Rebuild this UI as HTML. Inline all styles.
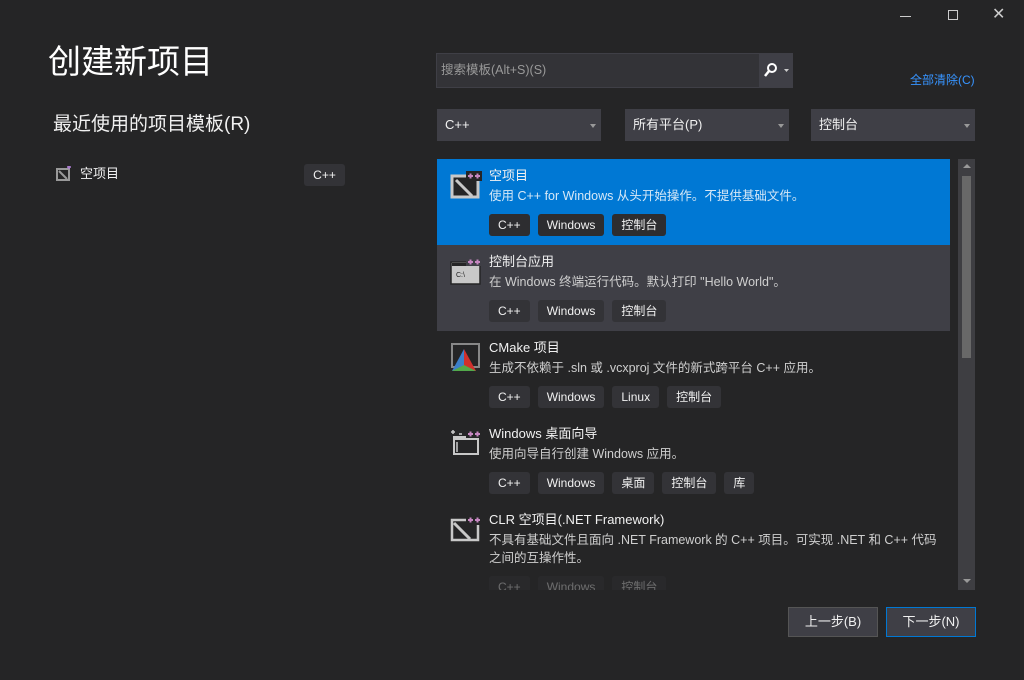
<!DOCTYPE html>
<html><head><meta charset="utf-8"><style>
*{margin:0;padding:0;box-sizing:border-box}
body{width:1024px;height:680px;background:#252526;color:#f1f1f1;font-family:"Liberation Sans","Noto Sans CJK SC",sans-serif;position:relative;overflow:hidden}
.a{position:absolute}
.dd{position:absolute;top:109px;height:32px;background:#3f3f46;font-size:13px;line-height:32px;padding:0 8px;color:#f1f1f1}
.dd:after{content:"";position:absolute;right:5px;top:15px;border:3px solid transparent;border-top:4px solid #999}
.item{position:absolute;left:437px;width:513px;height:86px}
.item .t{position:absolute;left:52px;top:8px;font-size:13px;line-height:18px}
.item .d{position:absolute;left:52px;top:28px;font-size:12.5px;color:#cfcfcf;line-height:18px;width:455px}
.tags{position:absolute;left:52px;top:55px;display:flex;gap:8px}
.tag{height:22px;background:#333337;border-radius:3px;font-size:12px;line-height:22px;padding:0 9px;color:#f1f1f1}
.ic{position:absolute;left:13px;top:12px}
.btn{position:absolute;top:607px;width:90px;height:30px;background:#3f3f46;border:1px solid #555;font-size:13px;text-align:center;line-height:28px}
</style></head><body>
<div class="a" style="left:900px;top:16px;width:11px;height:1px;background:#ccc"></div>
<div class="a" style="left:948px;top:10px;width:10px;height:10px;border:1px solid #ccc"></div>
<div class="a" style="left:992px;top:4px;font-size:16px;color:#ccc">✕</div>
<div class="a" style="left:48px;top:40px;font-size:33px;line-height:44px;color:#fff">创建新项目</div>
<div class="a" style="left:53px;top:112px;font-size:19px;line-height:26px">最近使用的项目模板(R)</div>
<svg class="a" style="left:56px;top:166px" width="16" height="16"><rect x="1" y="3" width="12" height="11" fill="none" stroke="#999" stroke-width="2"/><path d="M3 5L11 13" stroke="#999" stroke-width="2"/><path d="M11 1h4M13 -1v4" stroke="#b180d7" stroke-width="1.5"/></svg>
<div class="a" style="left:80px;top:165px;font-size:13px;line-height:18px">空项目</div>
<div class="a tag" style="left:304px;top:164px;width:41px;text-align:center;padding:0">C++</div>
<div class="a" style="left:436px;top:53px;width:357px;height:35px;background:#333337;border:1px solid #3f3f46"></div>
<div class="a" style="left:441px;top:61px;font-size:12.5px;line-height:18px;color:#999">搜索模板(Alt+S)(S)</div>
<div class="a" style="left:759px;top:54px;width:34px;height:33px;background:#3f3f46"></div>
<svg class="a" style="left:764px;top:62px" width="28" height="16"><circle cx="8" cy="6" r="4" fill="none" stroke="#fff" stroke-width="2"/><path d="M5 9L1 14" stroke="#fff" stroke-width="2.5"/><path d="M20 7h5l-2.5 3z" fill="#ccc"/></svg>
<div class="a" style="left:910px;top:71px;font-size:12px;line-height:18px;color:#3794ff">全部清除(C)</div>
<div class="dd" style="left:437px;width:164px">C++</div>
<div class="dd" style="left:625px;width:164px">所有平台(P)</div>
<div class="dd" style="left:811px;width:164px">控制台</div>

<div class="item" style="top:159px;background:#0078d4">
<svg class="ic" width="32" height="28"><rect x="2" y="5" width="26" height="21" fill="#252526" stroke="#c8c8c8" stroke-width="3"/><path d="M6 9L22 25" stroke="#c8c8c8" stroke-width="3"/><rect x="16" y="0" width="16" height="10" fill="#252526"/><path d="M18 5h5M20.5 2.5v5M25 5h5M27.5 2.5v5" stroke="#c586c0" stroke-width="2"/></svg>
<div class="t">空项目</div><div class="d" style="color:#d6e8f7">使用 C++ for Windows 从头开始操作。不提供基础文件。</div>
<div class="tags"><div class="tag" style="background:#2d2d30">C++</div><div class="tag" style="background:#2d2d30">Windows</div><div class="tag" style="background:#2d2d30">控制台</div></div></div>

<div class="item" style="top:245px;background:#3f3f46">
<svg class="ic" width="32" height="28"><rect x="1" y="5" width="29" height="22" fill="#c8c8c8" stroke="#252526" stroke-width="1.5"/><rect x="2" y="6" width="27" height="3" fill="#252526"/><text x="6" y="20" font-size="7" fill="#222" font-family="Liberation Sans">C:\</text><rect x="16" y="0" width="16" height="9" fill="#3f3f46"/><path d="M18 5h5M20.5 2.5v5M25 5h5M27.5 2.5v5" stroke="#c586c0" stroke-width="2"/></svg>
<div class="t">控制台应用</div><div class="d">在 Windows 终端运行代码。默认打印 "Hello World"。</div>
<div class="tags"><div class="tag">C++</div><div class="tag">Windows</div><div class="tag">控制台</div></div></div>

<div class="item" style="top:331px">
<svg class="ic" width="32" height="30"><rect x="2" y="1" width="27" height="23" fill="none" stroke="#888" stroke-width="2"/><path d="M14 6L2 28h12z" fill="#3c7fc9"/><path d="M14 6l12 22H14z" fill="#d0302c"/><path d="M2 28l12-6 12 6z" fill="#52a94a"/></svg>
<div class="t">CMake 项目</div><div class="d">生成不依赖于 .sln 或 .vcxproj 文件的新式跨平台 C++ 应用。</div>
<div class="tags"><div class="tag">C++</div><div class="tag">Windows</div><div class="tag">Linux</div><div class="tag">控制台</div></div></div>

<div class="item" style="top:417px">
<svg class="ic" width="32" height="30"><rect x="4" y="8" width="24" height="17" fill="none" stroke="#c8c8c8" stroke-width="2"/><rect x="4" y="8" width="24" height="3" fill="#c8c8c8"/><path d="M7 13v10M1 3h4M3 1v4M9 5h3" stroke="#c8c8c8" stroke-width="1.5"/><rect x="16" y="0" width="16" height="9" fill="#252526"/><path d="M18 5h5M20.5 2.5v5M25 5h5M27.5 2.5v5" stroke="#c586c0" stroke-width="2"/></svg>
<div class="t">Windows 桌面向导</div><div class="d">使用向导自行创建 Windows 应用。</div>
<div class="tags"><div class="tag">C++</div><div class="tag">Windows</div><div class="tag">桌面</div><div class="tag">控制台</div><div class="tag">库</div></div></div>

<div class="item" style="top:503px;height:87px;overflow:hidden">
<svg class="ic" width="32" height="28"><rect x="2" y="5" width="26" height="20" fill="none" stroke="#c8c8c8" stroke-width="2.5"/><path d="M4 8L20 24" stroke="#c8c8c8" stroke-width="3"/><rect x="16" y="0" width="16" height="10" fill="#252526"/><path d="M18 5h5M20.5 2.5v5M25 5h5M27.5 2.5v5" stroke="#c586c0" stroke-width="2"/></svg>
<div class="t">CLR 空项目(.NET Framework)</div><div class="d">不具有基础文件且面向 .NET Framework 的 C++ 项目。可实现 .NET 和 C++ 代码之间的互操作性。</div>
<div class="tags" style="top:73px;opacity:.35"><div class="tag">C++</div><div class="tag">Windows</div><div class="tag">控制台</div></div></div>

<div class="a" style="left:958px;top:159px;width:17px;height:431px;background:#3e3e42"></div>
<div class="a" style="left:962px;top:176px;width:9px;height:182px;background:#686868"></div>
<div class="a" style="left:963px;top:164px;border:4px solid transparent;border-bottom:4px solid #999;border-top:0"></div>
<div class="a" style="left:963px;top:579px;border:4px solid transparent;border-top:4px solid #999;border-bottom:0"></div>
<div class="btn" style="left:788px">上一步(B)</div>
<div class="btn" style="left:886px;border-color:#0078d4">下一步(N)</div>
</body></html>
